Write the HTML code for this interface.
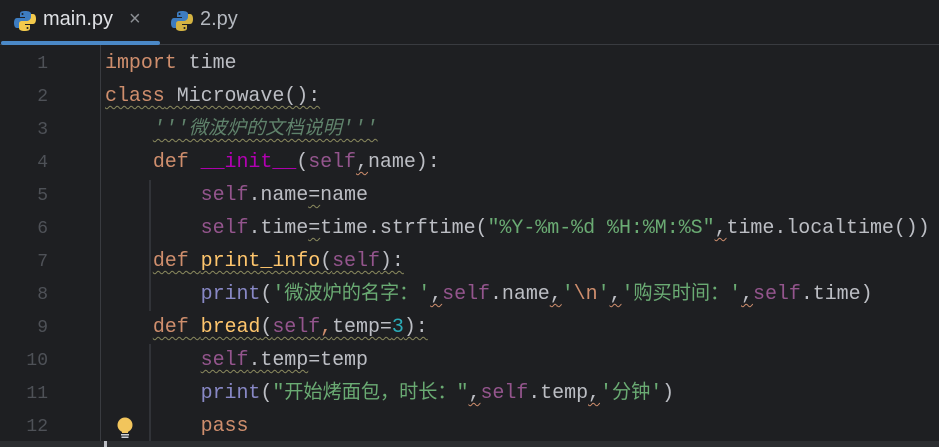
<!DOCTYPE html>
<html><head><meta charset="utf-8"><style>
html,body{margin:0;padding:0;background:#1e1f22;width:939px;height:447px;overflow:hidden}
body{position:relative;font-family:"Liberation Mono","Noto Sans CJK SC",monospace}
.tab{position:absolute;top:7px;font-family:"Liberation Sans",sans-serif;font-size:20px;line-height:24px;color:#dfe1e5}
.ln{position:absolute;left:0;width:48px;text-align:right;color:#4e5157;font-size:18px;line-height:24px;font-family:"Liberation Mono",monospace}
.c{position:absolute;left:105px;font-size:20px;line-height:24px;height:24px;color:#bcbec4;white-space:pre;letter-spacing:-0.05px}
.c span{line-height:24px}
.k{color:#cf8e6d}.s{color:#94558d}.st{color:#6aab73}.f{color:#ffc66d}.b{color:#8888c6}.m{color:#b200b2}.n{color:#2aacb8}
.cm{color:#5f826b;font-style:italic}
.cj{font-size:19.2px;font-family:"Noto Sans CJK SC",sans-serif}
.w{text-decoration:underline wavy #8b8a5e;text-decoration-thickness:1px;text-underline-offset:4px}
.wo{text-decoration:underline wavy #cf8e6d;text-decoration-thickness:1px;text-underline-offset:4px}
.g{position:absolute;width:2px;background:#313338}
</style></head><body>
<svg style="position:absolute;left:14px;top:10px" width="22" height="22" viewBox="0 0 22 22"><path d="M11 1c-5 0-5 2-5 3v3h5v1H3c-2 0-3 2-3 5s1 5 3 5h2v-3c0-2 2-4 4-4h5c2 0 3-1 3-3V4c0-2-2-3-6-3z" fill="#3d7cc0"/><path d="M11 21c5 0 5-2 5-3v-3h-5v-1h8c2 0 3-2 3-5s-1-5-3-5h-2v3c0 2-2 4-4 4H8c-2 0-3 1-3 3v4c0 2 2 3 6 3z" fill="#f2c94c"/><circle cx="8.5" cy="4" r="1" fill="#1e1f22"/><circle cx="13.5" cy="18" r="1" fill="#1e1f22"/></svg>
<div class="tab" style="left:43px">main.py</div>
<div class="tab" style="left:129px;color:#8c8f94;font-size:20px;top:7px">×</div>
<svg style="position:absolute;left:171px;top:10px" width="22" height="22" viewBox="0 0 22 22"><path d="M11 1c-5 0-5 2-5 3v3h5v1H3c-2 0-3 2-3 5s1 5 3 5h2v-3c0-2 2-4 4-4h5c2 0 3-1 3-3V4c0-2-2-3-6-3z" fill="#3d7cc0"/><path d="M11 21c5 0 5-2 5-3v-3h-5v-1h8c2 0 3-2 3-5s-1-5-3-5h-2v3c0 2-2 4-4 4H8c-2 0-3 1-3 3v4c0 2 2 3 6 3z" fill="#d4b342"/><circle cx="8.5" cy="4" r="1" fill="#1e1f22"/><circle cx="13.5" cy="18" r="1" fill="#1e1f22"/></svg>
<div class="tab" style="left:200px;color:#b4b8bf">2.py</div>
<div style="position:absolute;left:0;top:44px;width:939px;height:1px;background:#393b40"></div>
<div style="position:absolute;left:1px;top:41px;width:159px;height:4px;border-radius:2px;background:#4a88c7"></div>
<div style="position:absolute;left:100px;top:45px;width:1px;height:402px;background:#393b40"></div>
<div class="g" style="left:149px;top:180px;height:100px"></div>
<div class="g" style="left:149px;top:278px;height:33px"></div>
<div class="g" style="left:149px;top:344px;height:97px"></div>
<div style="position:absolute;left:0;top:441px;width:939px;height:6px;background:#2b2d30"></div>
<div style="position:absolute;left:104px;top:441px;width:3px;height:6px;background:#bcbec4"></div>

<div class="ln" style="top:52px">1</div><div class="ln" style="top:85px">2</div><div class="ln" style="top:118px">3</div><div class="ln" style="top:151px">4</div><div class="ln" style="top:184px">5</div><div class="ln" style="top:217px">6</div><div class="ln" style="top:250px">7</div><div class="ln" style="top:283px">8</div><div class="ln" style="top:316px">9</div><div class="ln" style="top:349px">10</div><div class="ln" style="top:382px">11</div><div class="ln" style="top:415px">12</div>

<div class="c" style="top:52px"><span class="k">import</span> time</div>
<div class="c" style="top:85px"><span class="w"><span class="k">class</span> Microwave():</span></div>
<div class="c" style="top:114px">    <span class="cm w">'''<span class="cj">微波炉的文档说明</span>'''</span></div>
<div class="c" style="top:151px">    <span class="k">def</span> <span class="m">__init__</span>(<span class="s">self</span><span class="wo">,</span>name):</div>
<div class="c" style="top:184px">        <span class="s">self</span>.name<span class="w">=</span>name</div>
<div class="c" style="top:217px">        <span class="s">self</span>.time<span class="w">=</span>time.strftime(<span class="st">"%Y-%m-%d %H:%M:%S"</span><span class="wo">,</span>time.localtime())</div>
<div class="c" style="top:250px">    <span class="w"><span class="k">def</span> <span class="f">print_info</span>(<span class="s">self</span>):</span></div>
<div class="c" style="top:279px">        <span class="b">print</span>(<span class="st">'<span class="cj">微波炉的名字：</span>'</span><span class="wo">,</span><span class="s">self</span>.name<span class="wo">,</span><span class="st">'<span class="k">\n</span>'</span><span class="wo">,</span><span class="st">'<span class="cj">购买时间：</span>'</span><span class="wo">,</span><span class="s">self</span>.time)</div>
<div class="c" style="top:316px">    <span class="w"><span class="k">def</span> <span class="f">bread</span>(<span class="s">self</span><span style="color:#cf8e6d">,</span>temp=<span class="n">3</span>):</span></div>
<div class="c" style="top:349px">        <span class="w"><span class="s">self</span>.temp</span>=temp</div>
<div class="c" style="top:378px">        <span class="b">print</span>(<span class="st">"<span class="cj">开始烤面包，时长：</span>"</span><span class="wo">,</span><span class="s">self</span>.temp<span class="wo">,</span><span class="st">'<span class="cj">分钟</span>'</span>)</div>
<div class="c" style="top:415px">        <span class="k">pass</span></div>
<svg style="position:absolute;left:116px;top:417px" width="18" height="24" viewBox="0 0 18 24"><circle cx="9" cy="8" r="7.5" fill="#f2c55c"/><rect x="6" y="12" width="6" height="4" fill="#f2c55c"/><rect x="5" y="17" width="8" height="1.5" fill="#ced0d6"/><rect x="5.5" y="19.5" width="7" height="1.5" fill="#ced0d6"/></svg>
</body></html>
